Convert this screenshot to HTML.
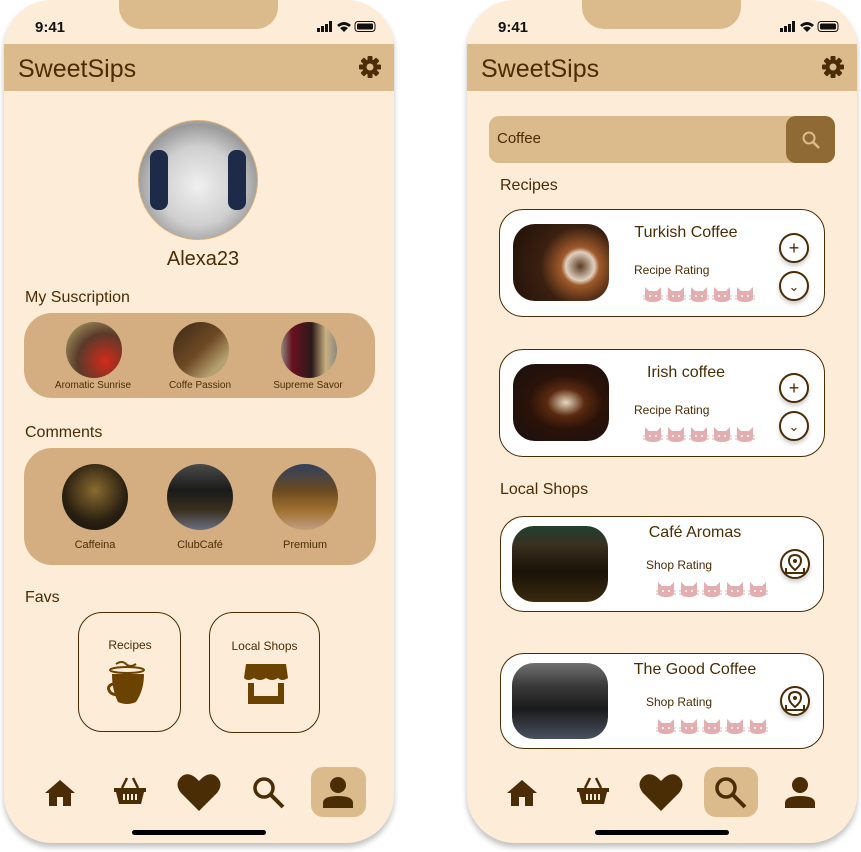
<!DOCTYPE html>
<html><head><meta charset="utf-8"><style>
*{margin:0;padding:0;box-sizing:border-box}
body{width:861px;height:852px;background:#fff;position:relative;overflow:hidden;font-family:"Liberation Sans",sans-serif;color:#4a2c05}
.a{position:absolute}
.phone{position:absolute;top:0;width:390px;height:843px;background:#fdecd8;border-radius:48px;overflow:hidden;box-shadow:0 4px 6px rgba(0,0,0,.25)}
.notch{position:absolute;left:115px;top:0;width:159px;height:29px;background:#dbbb8b;border-radius:0 0 22px 22px}
.time{position:absolute;left:31px;top:19px;font-size:15px;font-weight:bold;color:#111}
.hdr{position:absolute;left:0;top:44px;width:390px;height:47px;background:#dbbb8b}
.title{position:absolute;left:14px;top:55px;font-size:25px;color:#4a2c05}
.lbl{position:absolute;font-size:16px}
.circ{position:absolute;border-radius:50%}
.sm{position:absolute;font-size:10px;text-align:center;width:100px}
.card{position:absolute;background:#fff;border:1.5px solid #4a2c05;border-radius:24px}
.pic{position:absolute;border-radius:22px}
.ct{position:absolute;font-size:16px;text-align:center;width:160px}
.rt{position:absolute;font-size:12px}
.cats{position:absolute;display:flex;gap:3px}
.btn{position:absolute;width:30px;height:30px;border:2px solid #4a2c05;border-radius:50%;background:#fff;box-shadow:0 3px 4px rgba(0,0,0,.2);display:flex;align-items:center;justify-content:center;font-size:18px;line-height:1}
.navbox{position:absolute;background:#dbbb8b;border-radius:12px}
.bar{position:absolute;width:134px;height:5px;background:#000;border-radius:3px}
</style></head><body>

<svg width="0" height="0" style="position:absolute"><defs>
<g id="cat"><path d="M2 2 L6 6 L14 6 L18 2 L18 13 Q18 17 10 17 Q2 17 2 13Z" fill="#e3aeb0"/><path d="M0 11h3M0 14h3M17 11h3M17 14h3" stroke="#e3aeb0" stroke-width="1"/><circle cx="7" cy="11" r="1" fill="#fff"/><circle cx="13" cy="11" r="1" fill="#fff"/></g>
<g id="gear"><g fill="#4a2c05"><circle cx="11" cy="11" r="7.5"/><rect x="8.5" y="0" width="5" height="22" rx="1"/><rect x="8.5" y="0" width="5" height="22" rx="1" transform="rotate(45 11 11)"/><rect x="8.5" y="0" width="5" height="22" rx="1" transform="rotate(90 11 11)"/><rect x="8.5" y="0" width="5" height="22" rx="1" transform="rotate(135 11 11)"/></g><circle cx="11" cy="11" r="3.5" fill="#dbbb8b"/></g>
<g id="status"><rect x="0" y="7" width="3" height="4" fill="#111"/><rect x="4" y="5" width="3" height="6" fill="#111"/><rect x="8" y="3" width="3" height="8" fill="#111"/><rect x="12" y="0" width="3" height="11" fill="#111"/><path d="M20 4 Q27 -2 34 4 L32 6 Q27 2 22 6Z M23 7 Q27 4 31 7 L27 11Z" fill="#111"/><rect x="38" y="0.5" width="20" height="10" rx="3" fill="none" stroke="#111"/><rect x="40" y="2.5" width="16" height="6" rx="1.5" fill="#111"/></g>
<g id="home"><path d="M15 2 L0 15 H4 V28 H12 V19 H18 V28 H26 V15 H30Z" fill="#4a2c05"/></g>
<g id="basket"><path d="M8 12 L13 2 M24 12 L19 2" stroke="#4a2c05" stroke-width="2.5" fill="none"/><path d="M0 12 H32 V16 H30 L27 28 H5 L2 16 H0Z" fill="#4a2c05"/><path d="M10 18v6M14 18v6M18 18v6M22 18v6" stroke="#fdecd8" stroke-width="2"/></g>
<g id="heart"><path d="M22 38 L4 20 Q-3 11 4 4 Q12 -3 22 8 Q32 -3 40 4 Q47 11 40 20Z" fill="#4a2c05"/></g>
<g id="search"><circle cx="12" cy="12" r="9" stroke="#4a2c05" stroke-width="3.5" fill="none"/><path d="M18 18 L31 31" stroke="#4a2c05" stroke-width="4"/></g>
<g id="user"><circle cx="15" cy="9" r="8" fill="#4a2c05"/><path d="M0 32 V27 Q0 20 15 20 Q30 20 30 27 V32Z" fill="#4a2c05"/></g>
<g id="pin"><path d="M11 2 Q5 2 5 8 Q5 12 11 17 Q17 12 17 8 Q17 2 11 2Z" fill="none" stroke="#4a2c05" stroke-width="2"/><circle cx="11" cy="8" r="2" fill="#4a2c05"/><path d="M2 15 V20 H20 V15" fill="none" stroke="#4a2c05" stroke-width="2"/></g>
</defs></svg>

<!-- LEFT PHONE -->
<div class="phone" style="left:4px">
 <div class="notch"></div>
 <div class="time">9:41</div>
 <svg class="a" style="left:313px;top:21px" width="60" height="12"><use href="#status"/></svg>
 <div class="hdr"></div>
 <div class="title">SweetSips</div>
 <svg class="a" style="left:355px;top:56px" width="22" height="22"><use href="#gear"/></svg>

 <div class="circ" style="left:134px;top:120px;width:120px;height:120px;background:radial-gradient(circle at 50% 55%,#f0f0f0 0,#cfcfcf 45%,#9a9a9a 70%,#e4e4e4 100%);border:1px solid #d8b07a"></div>
 <div class="a" style="left:146px;top:150px;width:18px;height:60px;background:#1d2a48;border-radius:8px"></div>
 <div class="a" style="left:224px;top:150px;width:18px;height:60px;background:#1d2a48;border-radius:8px"></div>
 <div class="a" style="left:149px;top:248px;width:100px;text-align:center;font-size:20px">Alexa23</div>

 <div class="lbl" style="left:21px;top:289px">My Suscription</div>
 <div class="a" style="left:20px;top:313px;width:351px;height:85px;background:#d4ae80;border-radius:28px"></div>
 <div class="circ" style="left:62px;top:322px;width:56px;height:56px;background:radial-gradient(circle at 70% 70%,#d42a1a,#5a3a2a 50%,#a89a60 90%)"></div>
 <div class="circ" style="left:169px;top:322px;width:56px;height:56px;background:linear-gradient(135deg,#3a2815,#6e4a25 50%,#b4a070 80%)"></div>
 <div class="circ" style="left:277px;top:322px;width:56px;height:56px;background:linear-gradient(90deg,#8a8a80 0,#6a1020 20%,#2a1a1a 55%,#c8b080 80%,#8a8a80 100%)"></div>
 <div class="sm" style="left:39px;top:380px">Aromatic Sunrise</div>
 <div class="sm" style="left:146px;top:380px">Coffe Passion</div>
 <div class="sm" style="left:254px;top:380px">Supreme Savor</div>

 <div class="lbl" style="left:21px;top:424px">Comments</div>
 <div class="a" style="left:20px;top:448px;width:352px;height:117px;background:#d4ae80;border-radius:28px"></div>
 <div class="circ" style="left:58px;top:464px;width:66px;height:66px;background:radial-gradient(circle at 50% 40%,#8a6a30,#2a2010 60%,#101010)"></div>
 <div class="circ" style="left:163px;top:464px;width:66px;height:66px;background:linear-gradient(180deg,#4a4a4a 0,#1a1a1a 40%,#3a3020 70%,#6a7080 100%)"></div>
 <div class="circ" style="left:268px;top:464px;width:66px;height:66px;background:linear-gradient(180deg,#304060 0,#6a4a20 40%,#a07030 70%,#c0a080 100%)"></div>
 <div class="sm" style="left:41px;top:539px;font-size:11px">Caffeina</div>
 <div class="sm" style="left:146px;top:539px;font-size:11px">ClubCafé</div>
 <div class="sm" style="left:251px;top:539px;font-size:11px">Premium</div>

 <div class="lbl" style="left:21px;top:589px">Favs</div>
 <div class="a" style="left:74px;top:612px;width:103px;height:120px;border:1.5px solid #4a2c05;border-radius:24px"></div>
 <div class="a" style="left:205px;top:612px;width:111px;height:121px;border:1.5px solid #4a2c05;border-radius:24px"></div>
 <div class="a" style="left:95px;top:638px;width:62px;text-align:center;font-size:12px">Recipes</div>
 <div class="a" style="left:215px;top:639px;width:91px;text-align:center;font-size:12px">Local Shops</div>
 <svg class="a" style="left:102px;top:660px" width="48" height="46"><path d="M10 4 Q16 0 20 4 Q24 8 30 4" stroke="#6b4200" stroke-width="2" fill="none"/><ellipse cx="21" cy="10" rx="17" ry="3" fill="none" stroke="#6b4200" stroke-width="2"/><path d="M6 14 H38 Q38 30 30 42 Q21 46 12 42 Q6 30 6 14Z" fill="#6b4200"/><path d="M7 24 Q0 26 4 32 Q8 36 14 34" stroke="#6b4200" stroke-width="3" fill="none"/></svg>
 <svg class="a" style="left:238px;top:664px" width="48" height="42"><path d="M4 0 H44 L46 14 Q40 18 36 14 Q30 18 24 14 Q18 18 12 14 Q6 18 2 14Z" fill="#6b4200"/><path d="M6 19 V40 H42 V19 H36 V32 H12 V19Z" fill="#6b4200"/></svg>

 <svg class="a" style="left:41px;top:778px" width="30" height="30"><use href="#home"/></svg>
 <svg class="a" style="left:110px;top:776px" width="32" height="30"><use href="#basket"/></svg>
 <svg class="a" style="left:173px;top:773px" width="46" height="40"><use href="#heart"/></svg>
 <svg class="a" style="left:248px;top:776px" width="34" height="34"><use href="#search"/></svg>
 <div class="navbox" style="left:307px;top:767px;width:55px;height:50px"></div>
 <svg class="a" style="left:319px;top:776px" width="30" height="32"><use href="#user"/></svg>
 <div class="bar" style="left:128px;top:830px"></div>
</div>

<!-- RIGHT PHONE -->
<div class="phone" style="left:467px">
 <div class="notch"></div>
 <div class="time">9:41</div>
 <svg class="a" style="left:313px;top:21px" width="60" height="12"><use href="#status"/></svg>
 <div class="hdr"></div>
 <div class="title">SweetSips</div>
 <svg class="a" style="left:355px;top:56px" width="22" height="22"><use href="#gear"/></svg>

 <div class="a" style="left:22px;top:116px;width:346px;height:47px;background:#dbbb8b;border-radius:10px"></div>
 <div class="a" style="left:319px;top:116px;width:49px;height:47px;background:#8f6a35;border-radius:10px"></div>
 <svg class="a" style="left:334px;top:130px" width="20" height="20"><circle cx="8" cy="8" r="5.5" stroke="#dbbb8b" stroke-width="2" fill="none"/><path d="M12 12 L18 18" stroke="#dbbb8b" stroke-width="2.5"/></svg>
 <div class="a" style="left:30px;top:130px;font-size:15px">Coffee</div>
 <div class="lbl" style="left:33px;top:177px">Recipes</div>

 <div class="card" style="left:32px;top:209px;width:326px;height:108px"></div>
 <div class="pic" style="left:46px;top:224px;width:96px;height:77px;background:radial-gradient(circle at 70% 55%,#5a3a20 0,#e0d0c0 18%,#a05a2a 24%,#3a2010 50%,#201008 100%)"></div>
 <div class="ct" style="left:139px;top:224px">Turkish Coffee</div>
 <div class="rt" style="left:167px;top:263px">Recipe Rating</div>
 <div class="cats" style="left:176px;top:285px"><svg width="20" height="17"><use href="#cat"/></svg><svg width="20" height="17"><use href="#cat"/></svg><svg width="20" height="17"><use href="#cat"/></svg><svg width="20" height="17"><use href="#cat"/></svg><svg width="20" height="17"><use href="#cat"/></svg></div>
 <div class="btn" style="left:312px;top:233px">+</div>
 <div class="btn" style="left:312px;top:271px;font-size:13px">&#8964;</div>

 <div class="card" style="left:32px;top:349px;width:326px;height:108px"></div>
 <div class="pic" style="left:46px;top:364px;width:96px;height:77px;background:radial-gradient(ellipse at 55% 50%,#e8d8c0 0,#5a2a10 25%,#2a1208 50%,#1a1010 100%)"></div>
 <div class="ct" style="left:139px;top:364px">Irish coffee</div>
 <div class="rt" style="left:167px;top:403px">Recipe Rating</div>
 <div class="cats" style="left:176px;top:425px"><svg width="20" height="17"><use href="#cat"/></svg><svg width="20" height="17"><use href="#cat"/></svg><svg width="20" height="17"><use href="#cat"/></svg><svg width="20" height="17"><use href="#cat"/></svg><svg width="20" height="17"><use href="#cat"/></svg></div>
 <div class="btn" style="left:312px;top:373px">+</div>
 <div class="btn" style="left:312px;top:411px;font-size:13px">&#8964;</div>

 <div class="lbl" style="left:33px;top:481px">Local Shops</div>
 <div class="card" style="left:33px;top:516px;width:324px;height:96px"></div>
 <div class="pic" style="left:45px;top:526px;width:96px;height:76px;background:linear-gradient(180deg,#204030 0,#3a3020 25%,#1a1208 60%,#3a2a10 100%)"></div>
 <div class="ct" style="left:148px;top:524px">Café Aromas</div>
 <div class="rt" style="left:179px;top:558px">Shop Rating</div>
 <div class="cats" style="left:189px;top:580px"><svg width="20" height="17"><use href="#cat"/></svg><svg width="20" height="17"><use href="#cat"/></svg><svg width="20" height="17"><use href="#cat"/></svg><svg width="20" height="17"><use href="#cat"/></svg><svg width="20" height="17"><use href="#cat"/></svg></div>
 <div class="btn" style="left:313px;top:549px"><svg width="22" height="22"><use href="#pin"/></svg></div>

 <div class="card" style="left:33px;top:653px;width:324px;height:96px"></div>
 <div class="pic" style="left:45px;top:663px;width:96px;height:76px;background:linear-gradient(180deg,#707070 0,#3a3a3a 30%,#1a1a1a 60%,#4a5060 100%)"></div>
 <div class="ct" style="left:148px;top:661px">The Good Coffee</div>
 <div class="rt" style="left:179px;top:695px">Shop Rating</div>
 <div class="cats" style="left:189px;top:717px"><svg width="20" height="17"><use href="#cat"/></svg><svg width="20" height="17"><use href="#cat"/></svg><svg width="20" height="17"><use href="#cat"/></svg><svg width="20" height="17"><use href="#cat"/></svg><svg width="20" height="17"><use href="#cat"/></svg></div>
 <div class="btn" style="left:313px;top:686px"><svg width="22" height="22"><use href="#pin"/></svg></div>

 <svg class="a" style="left:40px;top:778px" width="30" height="30"><use href="#home"/></svg>
 <svg class="a" style="left:110px;top:776px" width="32" height="30"><use href="#basket"/></svg>
 <svg class="a" style="left:172px;top:773px" width="46" height="40"><use href="#heart"/></svg>
 <div class="navbox" style="left:237px;top:767px;width:54px;height:50px"></div>
 <svg class="a" style="left:247px;top:776px" width="34" height="34"><use href="#search"/></svg>
 <svg class="a" style="left:318px;top:776px" width="30" height="32"><use href="#user"/></svg>
 <div class="bar" style="left:128px;top:830px"></div>
</div>
</body></html>
